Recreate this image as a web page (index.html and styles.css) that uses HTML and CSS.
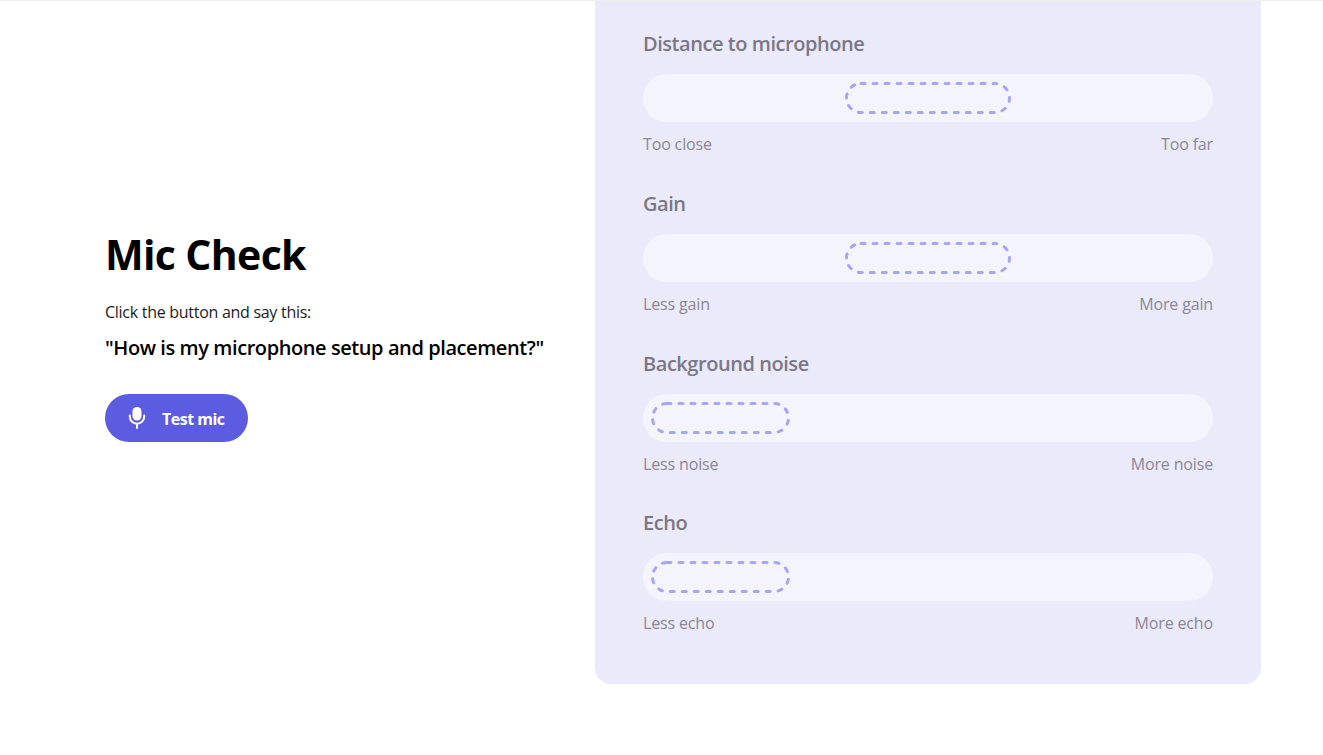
FILE: index.html
```html
<!DOCTYPE html>
<html lang="en">
<head>
  <meta charset="UTF-8" />
  <meta name="viewport" content="width=device-width, initial-scale=1.0"/>
  <title>Mic Check</title>
  <link rel="stylesheet" href="styles.css">
</head>
<body>

  <main class="page">
    <section class="intro">
      <h1>Mic Check</h1>
      <p class="hint">Click the button and say this:</p>
      <p class="phrase">"How is my microphone setup and placement?"</p>
      <button class="test-button" type="button">
        <svg class="mic-icon" width="18" height="24" viewBox="0 0 18 24" aria-hidden="true">
          <rect x="4.5" y="1" width="9" height="13.5" rx="4.5" fill="#fff"/>
          <path d="M1.8 9.5v1a7.2 7.2 0 0 0 14.4 0v-1" fill="none" stroke="#fff" stroke-width="2" stroke-linecap="round"/>
          <path d="M9 18v4" fill="none" stroke="#fff" stroke-width="2" stroke-linecap="round"/>
        </svg>
        <span class="test-label">Test mic</span>
      </button>
    </section>

    <section class="panel">
      <div class="meter">
        <h2>Distance to microphone</h2>
        <div class="track track-center">
          <svg class="target" width="166" height="32" viewBox="0 0 166 32"><rect x="1.5" y="1.5" width="163" height="29" rx="14.5"/></svg>
        </div>
        <div class="scale"><span>Too close</span><span>Too far</span></div>
      </div>
      <div class="meter">
        <h2>Gain</h2>
        <div class="track track-center">
          <svg class="target" width="166" height="32" viewBox="0 0 166 32"><rect x="1.5" y="1.5" width="163" height="29" rx="14.5"/></svg>
        </div>
        <div class="scale"><span>Less gain</span><span>More gain</span></div>
      </div>
      <div class="meter">
        <h2>Background noise</h2>
        <div class="track">
          <svg class="target" width="139" height="32" viewBox="0 0 139 32"><rect x="1.5" y="1.5" width="136" height="29" rx="14.5"/></svg>
        </div>
        <div class="scale"><span>Less noise</span><span>More noise</span></div>
      </div>
      <div class="meter">
        <h2>Echo</h2>
        <div class="track">
          <svg class="target" width="139" height="32" viewBox="0 0 139 32"><rect x="1.5" y="1.5" width="136" height="29" rx="14.5"/></svg>
        </div>
        <div class="scale"><span>Less echo</span><span>More echo</span></div>
      </div>
    </section>
  </main>

</body>
</html>
```

FILE: styles.css
```css
body {
  font-family: 'Open Sans', 'Noto Sans', sans-serif;
  background: white;
  color: black;
  margin: 0;
  border-top: 1px solid #eeeeee;
}

.page {
  display: flex;
  align-items: center;
  padding-left: 105px;
}

.intro {
  width: 490px;
  padding-bottom: 15px;
}

h1 {
  margin: 0 0 21px;
  font-size: 41px;
  line-height: 50px;
  font-weight: 700;
  letter-spacing: -0.65px;
}

.hint {
  margin: 0 0 10px;
  font-size: 16px;
  line-height: 24px;
  letter-spacing: -0.28px;
  color: #1c1c1c;
}

.phrase {
  margin: 0 0 32px;
  font-size: 20px;
  line-height: 28px;
  font-weight: 600;
  letter-spacing: -0.42px;
}

.test-button {
  display: flex;
  align-items: center;
  gap: 16px;
  height: 48px;
  padding: 0 23px;
  border: none;
  border-radius: 24px;
  background: #5c5ce0;
  color: white;
  font-family: inherit;
  font-size: 16px;
  font-weight: 700;
  letter-spacing: -0.5px;
}

.test-label {
  padding-top: 2px;
}

.panel {
  width: 570px;
  padding: 27px 48px 48.75px;
  background: #ebeafa;
  border-radius: 0 0 16px 16px;
}

.meter {
  margin-bottom: 31.75px;
}

.meter:last-child {
  margin-bottom: 0;
}

h2 {
  margin: 0 0 14px;
  font-size: 20px;
  line-height: 32px;
  font-weight: 600;
  letter-spacing: -0.45px;
  color: #7b7786;
}

.track {
  display: flex;
  align-items: center;
  height: 48px;
  padding: 0 8px;
  background: #f4f4fe;
  border-radius: 24px;
}

.track-center {
  justify-content: center;
}

.target rect {
  fill: none;
  stroke: #a8a6f0;
  stroke-width: 3;
  stroke-linecap: round;
  stroke-dasharray: 4 8;
}

.scale {
  display: flex;
  justify-content: space-between;
  margin-top: 10px;
  font-size: 16px;
  line-height: 24px;
  letter-spacing: -0.15px;
  color: #8a8796;
}
```
